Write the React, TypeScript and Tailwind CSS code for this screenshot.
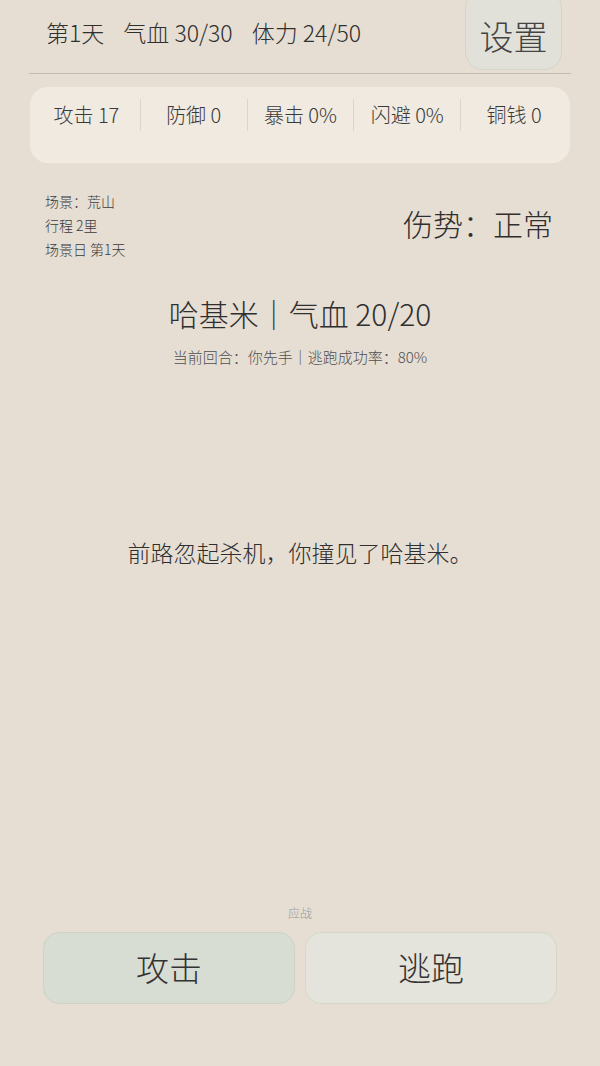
import React from 'react'

const stats = ['攻击 17', '防御 0', '暴击 0%', '闪避 0%', '铜钱 0']

export default function App() {
  return (
    <div
      className="w-[600px] h-[1066px] bg-[#e6ded3] text-[#333] flex flex-col overflow-hidden"
      style={{ fontFamily: '"Noto Sans CJK SC", "Noto Sans", sans-serif' }}
    >
      {/* top bar */}
      <div className="mx-[29px] h-[74px] flex items-start justify-between border-b border-[#c4bcb2]">
        <div className="pl-[17px] pt-[16px] text-[23px] leading-[32px] font-light text-[#2f2f2f] flex gap-[19px]">
          <span>第1天</span>
          <span>气血 30/30</span>
          <span>体力 24/50</span>
        </div>
        <button className="mr-[9px] mt-[-10px] w-[97px] h-[80px] pt-[10px] rounded-[18px] bg-[#e1e1d9] border border-[#d4d4ca] text-[34px] font-light text-[#444]">
          设置
        </button>
      </div>

      {/* stats card */}
      <div className="mx-[30px] mt-[13px] h-[76px] rounded-[18px] bg-[#f0eae1] pt-[12px] px-[3px]">
        <div className="grid grid-cols-5 h-[32px]">
          {stats.map((s, i) => (
            <div
              key={s}
              className={`flex items-center justify-center text-[20px] font-light text-[#3a3a3a] ${i > 0 ? 'border-l border-[#ddd5ca]' : ''}`}
            >
              {s}
            </div>
          ))}
        </div>
      </div>

      {/* scene info */}
      <div className="mx-[45px] mt-[26px] flex justify-between items-center">
        <div className="text-[14px] leading-[24px] font-light text-[#3a3a3a]">
          <div>场景：荒山</div>
          <div>行程 2里</div>
          <div>场景日 第1天</div>
        </div>
        <div className="text-[30px] font-light text-[#2f2f2f] mr-[2px] mb-[3px]">伤势：正常</div>
      </div>

      {/* enemy */}
      <div className="mt-[30px] text-center text-[30px] leading-[44px] font-light text-[#2f2f2f]">
        哈基米｜气血 20/20
      </div>
      <div className="mt-[11px] text-center text-[15px] font-light text-[#505050]">
        当前回合：你先手｜逃跑成功率：80%
      </div>

      {/* message */}
      <div className="flex-1 flex flex-col">
        <div className="mt-[166px] text-center text-[23px] font-light text-[#2f2f2f]">
          前路忽起杀机，你撞见了哈基米。
        </div>
      </div>

      {/* actions */}
      <div className="mx-[43px] mb-[62px]">
        <div className="text-center text-[12px] font-light text-[#999] mb-[10px]">应战</div>
        <div className="grid grid-cols-2 gap-[10px]">
          <button className="h-[72px] rounded-[16px] bg-[#d8ddd3] border border-[#cdd2c6] text-[33px] font-light text-[#333]">
            攻击
          </button>
          <button className="h-[72px] rounded-[16px] bg-[#e5e4dc] border border-[#d6d6cc] text-[33px] font-light text-[#333]">
            逃跑
          </button>
        </div>
      </div>
    </div>
  )
}
